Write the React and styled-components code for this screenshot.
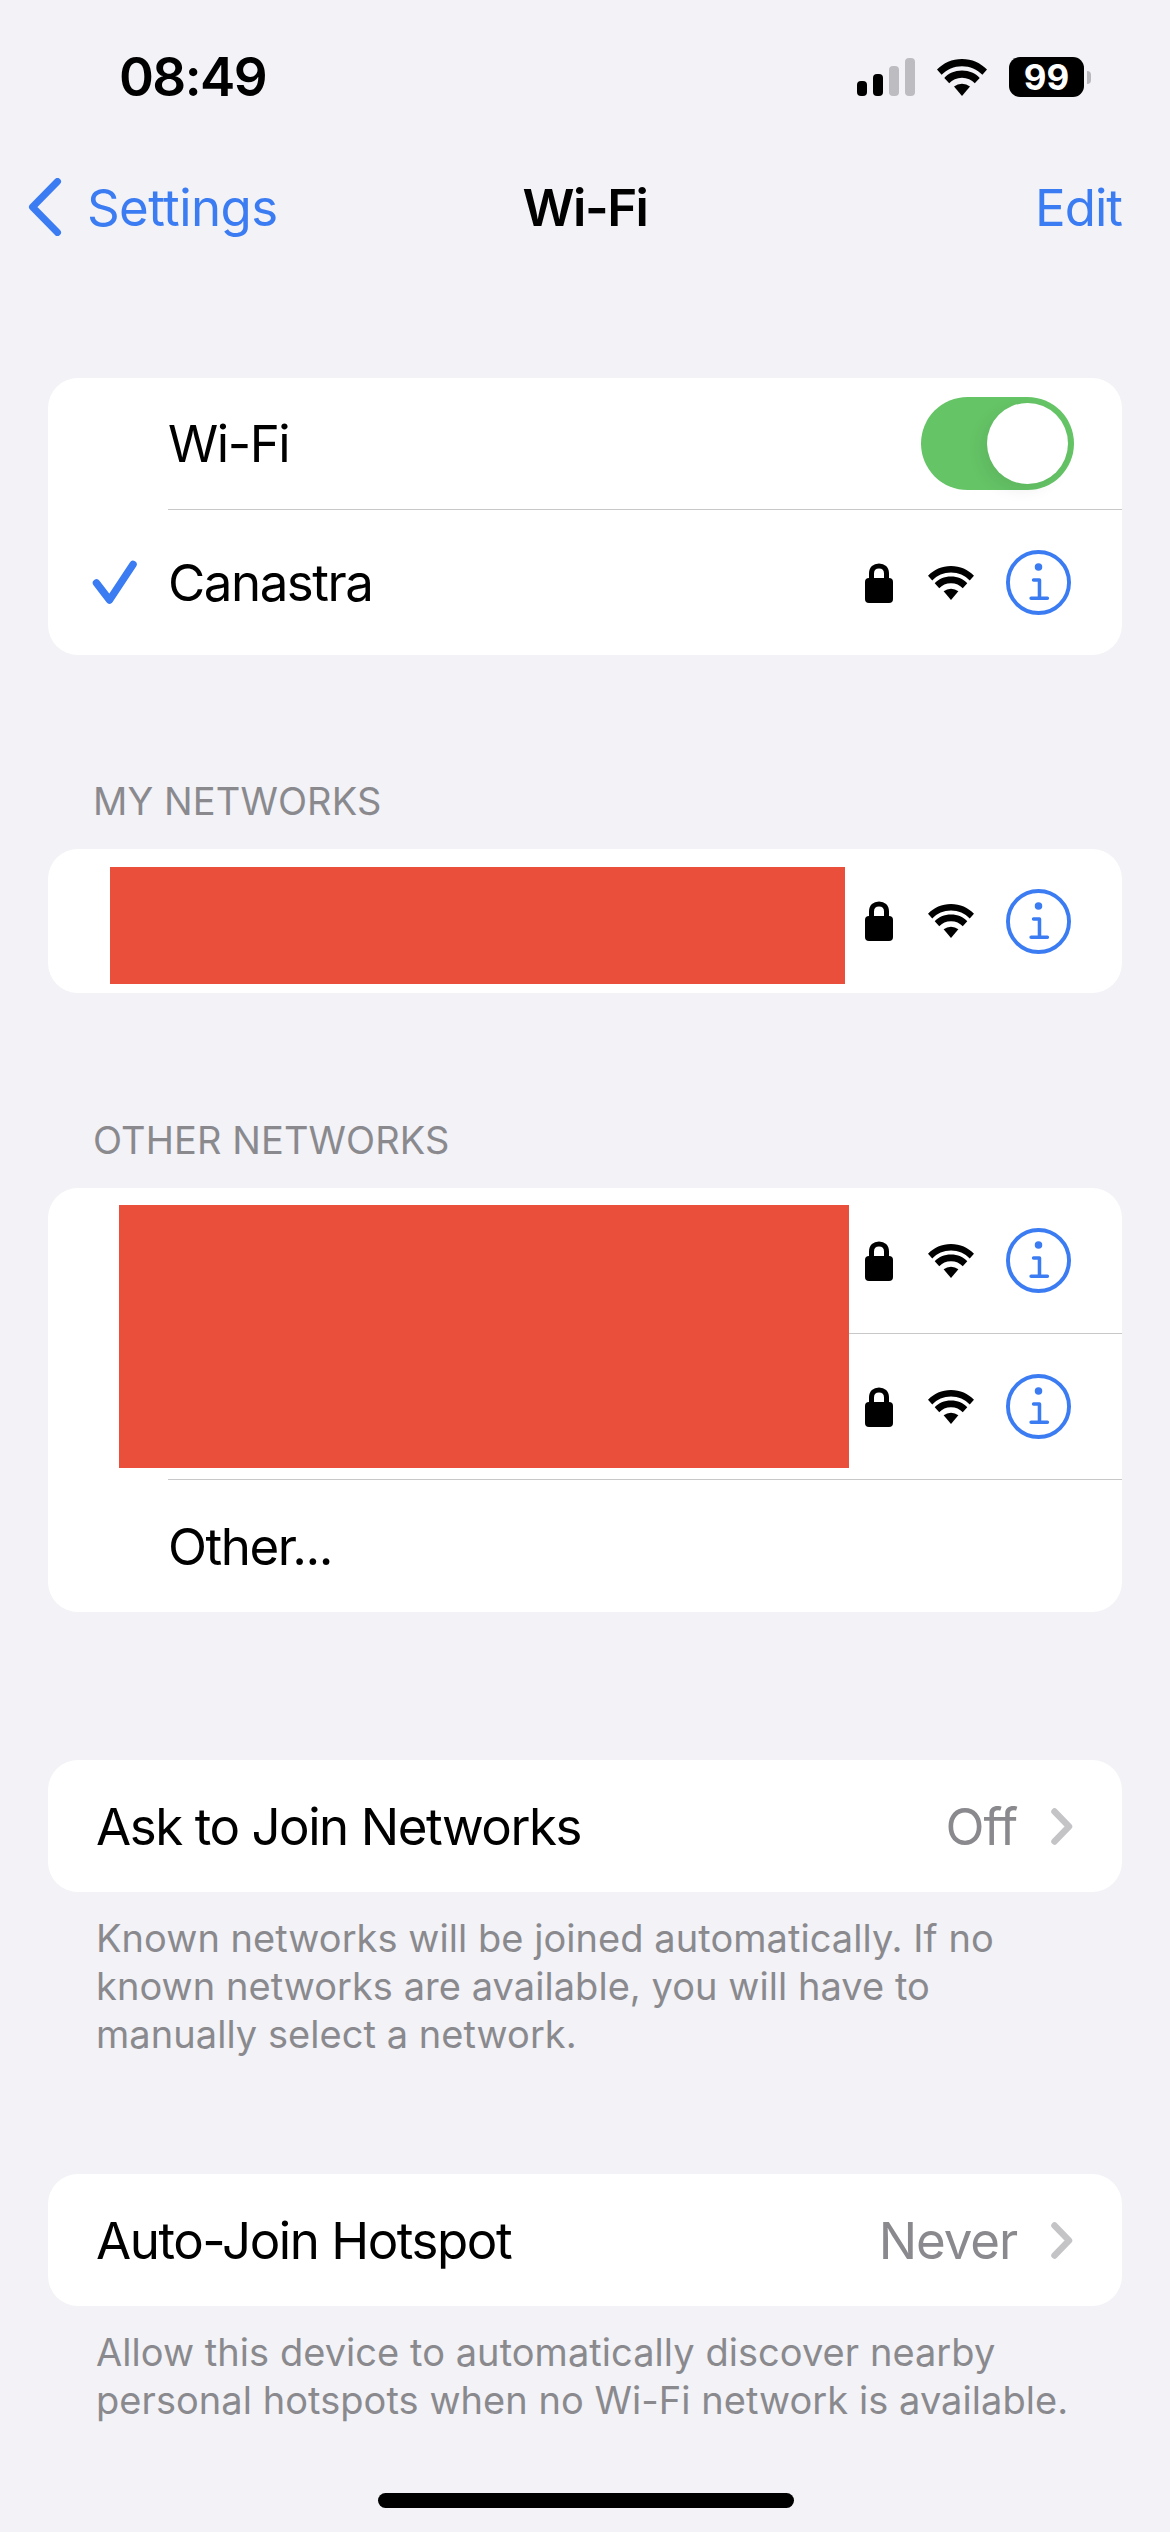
import React from 'react';
import styled, { createGlobalStyle } from 'styled-components';

const BLUE = '#3b7cf2';
const GREY = '#8a8a8e';

const GlobalStyle = createGlobalStyle`
  html, body {
    margin: 0;
    padding: 0;
    background: #f2f2f7;
  }
  body {
    font-family: Inter, "Liberation Sans", sans-serif;
    color: #000;
  }
`;

const Screen = styled.div`
  position: relative;
  width: 1170px;
  height: 2532px;
  overflow: hidden;
  background: #f2f2f7;
`;

const StatusBar = styled.div`
  height: 154px;
  display: flex;
  align-items: center;
  justify-content: space-between;
  padding: 0 79px 0 119px;
  box-sizing: border-box;
`;

const Clock = styled.div`
  font-size: 53px;
  font-weight: 600;
  letter-spacing: -1.6px;
`;

const StatusIcons = styled.div`
  display: flex;
  align-items: center;
  gap: 22px;
`;

const Battery = styled.div`
  display: flex;
  align-items: center;
  gap: 3px;
`;

const BatteryBody = styled.div`
  width: 75px;
  height: 40px;
  border-radius: 11px;
  background: #000;
  color: #fff;
  font-size: 35px;
  font-weight: 700;
  display: flex;
  align-items: center;
  justify-content: center;
`;

const BatteryCap = styled.div`
  width: 4px;
  height: 13px;
  border-radius: 0 6px 6px 0;
  background: #b9b9bd;
`;

const NavBar = styled.div`
  height: 106px;
  display: grid;
  grid-template-columns: 1fr auto 1fr;
  align-items: center;
  padding: 0 48px;
  box-sizing: border-box;
`;

const BackLink = styled.div`
  display: flex;
  align-items: center;
  gap: 25px;
  margin-left: -20px;
  color: ${BLUE};
  font-size: 51px;
  letter-spacing: -0.6px;
`;

const NavTitle = styled.div`
  font-size: 51px;
  font-weight: 600;
  letter-spacing: -1.5px;
`;

const NavAction = styled.div`
  justify-self: end;
  color: ${BLUE};
  font-size: 51px;
  letter-spacing: -1px;
`;

const Content = styled.div`
  padding: 118px 48px 0;
`;

const Card = styled.div`
  position: relative;
  background: #fff;
  border-radius: 30px;
  overflow: hidden;
  margin-bottom: ${(p) => p.$after || 0}px;
`;

const Row = styled.div`
  height: ${(p) => p.$height}px;
  display: flex;
  align-items: center;
  padding: 0 ${(p) => p.$right ?? 48}px 0 ${(p) => p.$left ?? 120}px;
  box-sizing: border-box;
  font-size: 51px;
  letter-spacing: -1.45px;
`;

const RowLabel = styled.div`
  flex: 1;
`;

const Divider = styled.div`
  height: 1px;
  margin-left: 120px;
  background: #c8c8ca;
`;

const CheckSlot = styled.div`
  width: 76px;
  margin-left: -76px;
  display: flex;
  align-items: center;
`;

const Toggle = styled.div`
  position: relative;
  width: 153px;
  height: 93px;
  border-radius: 47px;
  background: #65c466;
`;

const Knob = styled.div`
  position: absolute;
  top: 6px;
  right: 6px;
  width: 81px;
  height: 81px;
  border-radius: 50%;
  background: #fff;
  box-shadow: -6px 6px 16px rgba(0, 0, 0, 0.07);
`;

const NetworkIcons = styled.div`
  display: flex;
  align-items: center;
  margin-right: 3px;
`;

const LockSlot = styled.div`
  display: flex;
  margin-right: 35px;
`;

const WifiSlot = styled.div`
  display: flex;
  margin-right: 32px;
`;

const SectionTitle = styled.div`
  height: 71px;
  padding-left: 45px;
  color: ${GREY};
  font-size: 38px;
  line-height: 47px;
  letter-spacing: 0.1px;
`;

const Value = styled.div`
  color: ${GREY};
  font-size: 51px;
  letter-spacing: -1.1px;
  margin-right: 34px;
`;

const Note = styled.div`
  padding: 0 50px 0 48px;
  color: ${GREY};
  font-size: 38px;
  line-height: 48px;
  letter-spacing: 0.05px;
  margin-top: 22px;
  margin-bottom: ${(p) => p.$after || 0}px;
`;

const Redaction = styled.div`
  position: absolute;
  left: ${(p) => p.$left}px;
  top: ${(p) => p.$top}px;
  width: ${(p) => p.$width}px;
  height: ${(p) => p.$height}px;
  background: #ea4f3c;
`;

const HomeIndicator = styled.div`
  position: absolute;
  left: 378px;
  bottom: 24px;
  width: 416px;
  height: 15px;
  border-radius: 8px;
  background: #000;
`;

const SignalIcon = () => (
  <svg width="58" height="38" viewBox="0 0 58 38">
    <rect x="0" y="23" width="10" height="15" rx="4" fill="#000" />
    <rect x="16" y="16" width="10" height="22" rx="4" fill="#000" />
    <rect x="32" y="8" width="10" height="30" rx="4" fill="#bdbdc1" />
    <rect x="48" y="0" width="10" height="38" rx="4" fill="#bdbdc1" />
  </svg>
);

// three wedges that share one point at the bottom of the fan
const WifiIcon = ({ width, height }) => (
  <svg width={width} height={height} viewBox="0 0 50 37">
    <path
      d="M25 37 L17 27.6 A13 13 0 0 1 33 27.6 Z"
      fill="#000"
    />
    <path
      d="M25 11.5 C17.6 11.5 11.4 14.4 7.3 18.9 L12.2 24.3 C15.3 20.9 19.8 18.8 25 18.8 C30.2 18.8 34.7 20.9 37.8 24.3 L42.7 18.9 C38.6 14.4 32.4 11.5 25 11.5 Z"
      fill="#000"
    />
    <path
      d="M25 0 C15 0 6.4 4 0 10.6 L4.6 15.8 C9.9 10.4 17 7.2 25 7.2 C33 7.2 40.1 10.4 45.4 15.8 L50 10.6 C43.6 4 35 0 25 0 Z"
      fill="#000"
    />
  </svg>
);

const LockIcon = () => (
  <svg width="28" height="40" viewBox="0 0 28 40">
    <path
      d="M6.5 17 V10.5 C6.5 5.6 9.6 3 14 3 C18.4 3 21.5 5.6 21.5 10.5 V17"
      fill="none"
      stroke="#000"
      strokeWidth="5"
    />
    <rect x="0" y="15" width="28" height="25" rx="4" fill="#000" />
  </svg>
);

const InfoIcon = () => (
  <svg width="65" height="65" viewBox="0 0 66 66">
    <circle cx="33" cy="33" r="31" fill="none" stroke={BLUE} strokeWidth="4" />
    <circle cx="33" cy="17.3" r="3.8" fill={BLUE} />
    <path
      d="M28 30.5 H34 V49 M25.5 49 H42"
      fill="none"
      stroke={BLUE}
      strokeWidth="3.6"
      strokeLinecap="round"
      strokeLinejoin="round"
    />
  </svg>
);

const CheckIcon = () => (
  <svg width="46" height="45" viewBox="0 0 46 45">
    <path
      d="M4.5 23 L17.5 40 L41 4.5"
      fill="none"
      stroke={BLUE}
      strokeWidth="7.5"
      strokeLinecap="round"
      strokeLinejoin="round"
    />
  </svg>
);

const BackIcon = () => (
  <svg width="34" height="58" viewBox="0 0 34 58" style={{ flex: 'none' }}>
    <path
      d="M29.5 3.5 L4.5 29 L29.5 54.5"
      fill="none"
      stroke={BLUE}
      strokeWidth="7"
      strokeLinecap="round"
      strokeLinejoin="round"
    />
  </svg>
);

const ChevronIcon = () => (
  <svg width="22" height="37" viewBox="0 0 22 37">
    <path
      d="M3.5 3.5 L18 18.5 L3.5 33.5"
      fill="none"
      stroke="#c4c4c7"
      strokeWidth="6.5"
      strokeLinecap="round"
      strokeLinejoin="round"
    />
  </svg>
);

const NetworkStatus = () => (
  <NetworkIcons>
    <LockSlot>
      <LockIcon />
    </LockSlot>
    <WifiSlot>
      <WifiIcon width={46} height={34} />
    </WifiSlot>
    <InfoIcon />
  </NetworkIcons>
);

const App = () => (
  <Screen>
    <GlobalStyle />
    <StatusBar>
      <Clock>08:49</Clock>
      <StatusIcons>
        <SignalIcon />
        <WifiIcon width={50} height={37} />
        <Battery>
          <BatteryBody>99</BatteryBody>
          <BatteryCap />
        </Battery>
      </StatusIcons>
    </StatusBar>

    <NavBar>
      <BackLink>
        <BackIcon />
        Settings
      </BackLink>
      <NavTitle>Wi-Fi</NavTitle>
      <NavAction>Edit</NavAction>
    </NavBar>

    <Content>
      <Card $after={123}>
        <Row $height={131}>
          <RowLabel>Wi-Fi</RowLabel>
          <Toggle>
            <Knob />
          </Toggle>
        </Row>
        <Divider />
        <Row $height={145}>
          <CheckSlot>
            <CheckIcon />
          </CheckSlot>
          <RowLabel>Canastra</RowLabel>
          <NetworkStatus />
        </Row>
      </Card>

      <SectionTitle>MY NETWORKS</SectionTitle>
      <Card $after={124}>
        <Row $height={144}>
          <RowLabel />
          <NetworkStatus />
        </Row>
        <Redaction $left={62} $top={18} $width={735} $height={117} />
      </Card>

      <SectionTitle>OTHER NETWORKS</SectionTitle>
      <Card $after={148}>
        <Row $height={145}>
          <RowLabel />
          <NetworkStatus />
        </Row>
        <Divider />
        <Row $height={145}>
          <RowLabel />
          <NetworkStatus />
        </Row>
        <Divider />
        <Row $height={132}>
          <RowLabel>Other...</RowLabel>
        </Row>
        <Redaction $left={71} $top={17} $width={730} $height={263} />
      </Card>

      <Card>
        <Row $height={132} $left={48} $right={49}>
          <RowLabel>Ask to Join Networks</RowLabel>
          <Value>Off</Value>
          <ChevronIcon />
        </Row>
      </Card>
      <Note $after={116}>
        Known networks will be joined automatically. If no known networks are
        available, you will have to manually select a network.
      </Note>

      <Card>
        <Row $height={132} $left={48} $right={49}>
          <RowLabel>Auto-Join Hotspot</RowLabel>
          <Value>Never</Value>
          <ChevronIcon />
        </Row>
      </Card>
      <Note>
        Allow this device to automatically discover nearby personal hotspots
        when no Wi-Fi network is available.
      </Note>
    </Content>

    <HomeIndicator />
  </Screen>
);

export default App;
